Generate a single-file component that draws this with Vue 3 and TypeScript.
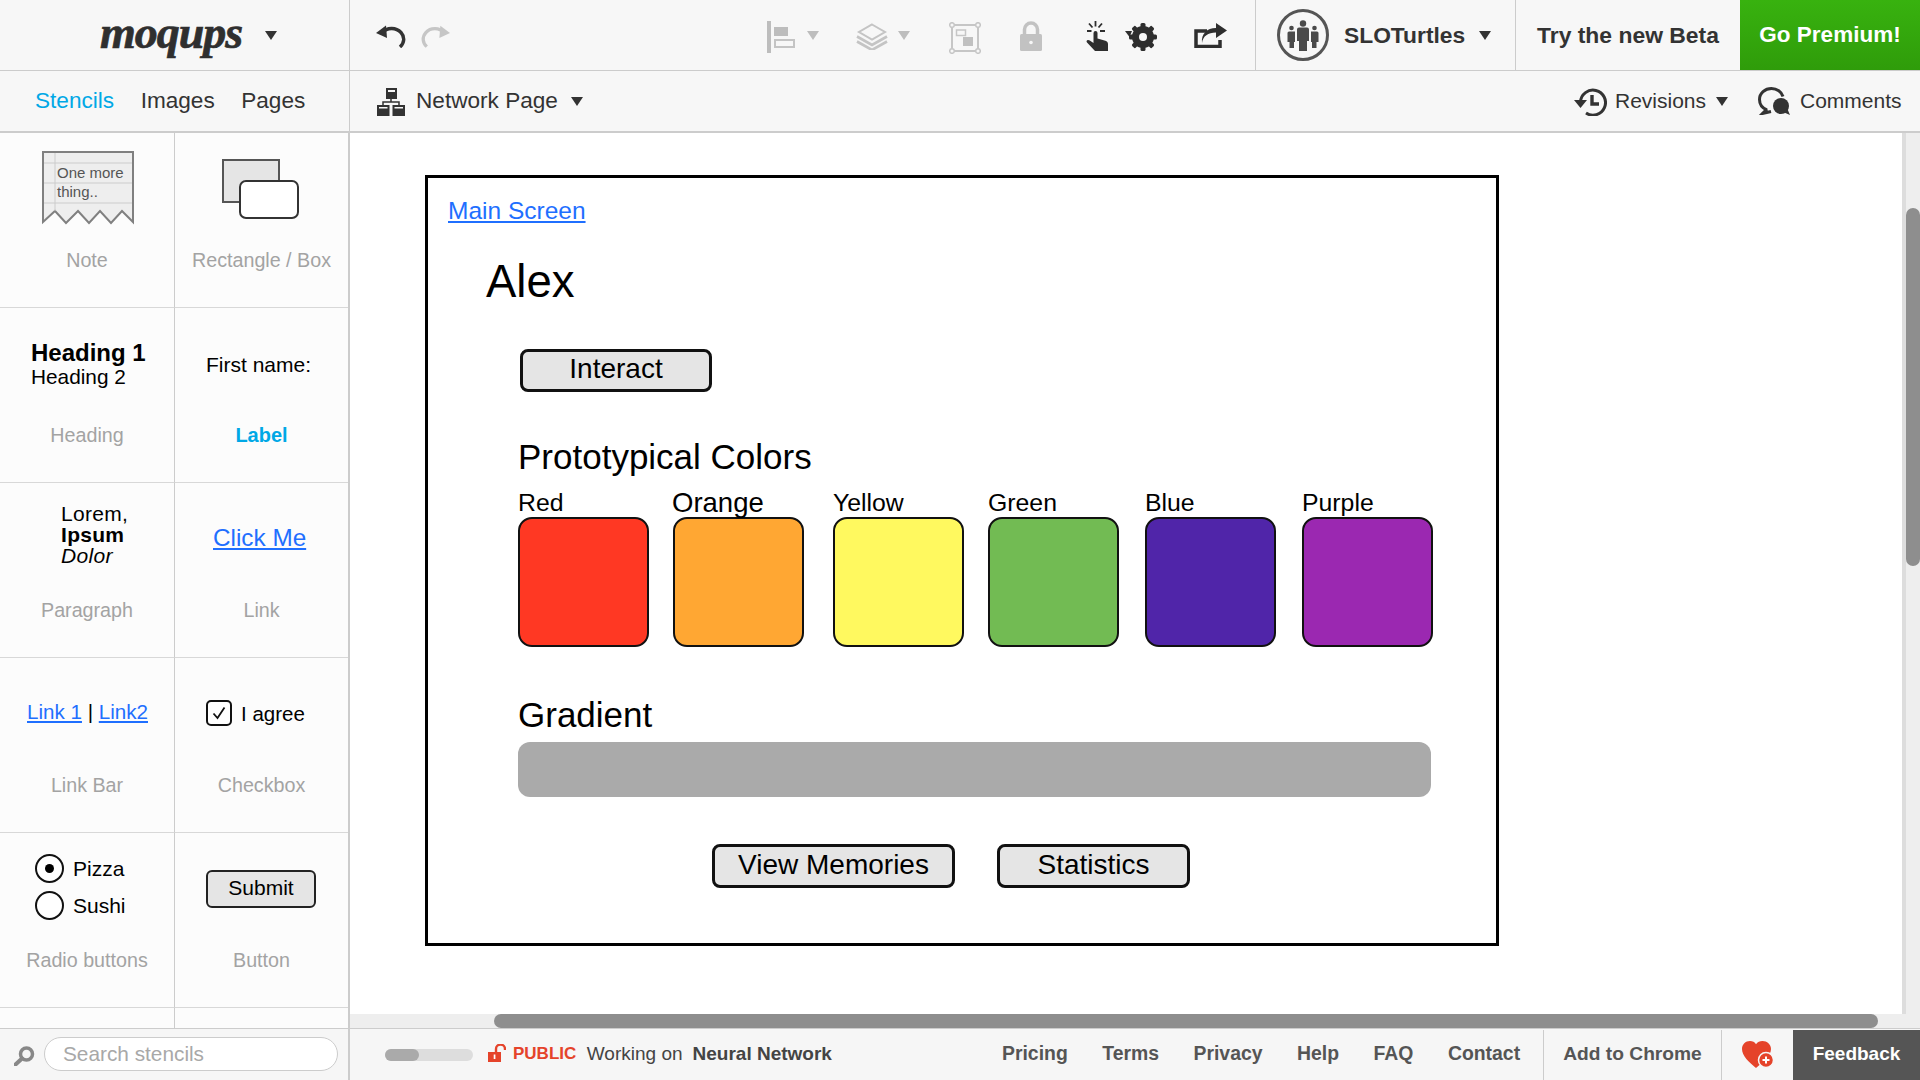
<script setup lang="ts">
const swatches: { name: string; color: string; big?: boolean }[] = [
  { name: 'Red', color: '#ff3823' },
  { name: 'Orange', color: '#ffa733', big: true },
  { name: 'Yellow', color: '#fff95f' },
  { name: 'Green', color: '#72bb53' },
  { name: 'Blue', color: '#5025a9' },
  { name: 'Purple', color: '#9b28b1' },
]
const footerLinks: string[] = ['Pricing', 'Terms', 'Privacy', 'Help', 'FAQ', 'Contact']
</script>

<template>
  <div class="app">
    <header class="topbar">
      <div class="logo-cell">
        <span class="logo">moqups</span>
        <i class="caret logo-caret"></i>
      </div>
      <div class="tools">
        <svg class="ic-undo" width="30" height="24" viewBox="0 0 30 24"><path d="M6 9C11 3 20 3 25 8.500C29 13 28.500 19 24 23" fill="none" stroke="#333" stroke-width="3.400"/><path d="M0 9L10 1.500L11 14Z" fill="#333"/></svg>
        <svg class="ic-redo" width="29" height="24" viewBox="0 0 30 24"><path d="M24 9C19 3 10 3 5 8.500C1 13 1.500 19 6 23" fill="none" stroke="#c6c6c6" stroke-width="3.400"/><path d="M30 9L20 1.500L19 14Z" fill="#c6c6c6"/></svg>

        <svg class="ic-align" width="28" height="32" viewBox="0 0 28 32"><rect width="4" height="32" fill="#bdbdbd"/><rect x="7" y="6" width="14" height="9" fill="#bdbdbd"/><rect x="8" y="19" width="19" height="7" fill="none" stroke="#c4c4c4" stroke-width="2"/></svg>
        <i class="caret grey ca-align"></i>
        <svg class="ic-layers" width="32" height="27" viewBox="0 0 32 27"><path d="M16 1.500L29 9L16 16.500L3 9Z" fill="none" stroke="#c4c4c4" stroke-width="2"/><path d="M1 13.500L16 22L31 13.500M1 18.500L16 27L31 18.500" fill="none" stroke="#c4c4c4" stroke-width="2.600"/></svg>
        <i class="caret grey ca-layers"></i>
        <svg class="ic-box" width="32" height="32" viewBox="0 0 32 32"><rect x="3" y="3" width="26" height="26" fill="none" stroke="#c6c6c6" stroke-width="2"/><g fill="#f7f7f7" stroke="#c6c6c6" stroke-width="1.500"><circle cx="3" cy="3" r="2.300"/><circle cx="29" cy="3" r="2.300"/><circle cx="3" cy="29" r="2.300"/><circle cx="29" cy="29" r="2.300"/></g><rect x="7.500" y="8" width="9" height="5.500" fill="none" stroke="#c6c6c6" stroke-width="1.500"/><rect x="14" y="15" width="10" height="9" fill="#c0c0c0"/></svg>
        <svg class="ic-lock" width="22" height="30" viewBox="0 0 22 30"><path d="M4.500 14V8.500a6.500 6.500 0 0 1 13 0V14" fill="none" stroke="#c2c2c2" stroke-width="3.500"/><rect y="13" width="22" height="17" rx="1.500" fill="#c2c2c2"/><circle cx="11" cy="21.500" r="1.800" fill="#f7f7f7"/></svg>
        <svg class="ic-hand" width="22" height="31" viewBox="0 0 22 31"><path d="M7.500 13a2 2 0 0 1 4 0V18.500L18.500 20.500C20.800 21.200 22 22.200 22 24V31H9L1 22.500C-0.500 20.500 2 19 3.800 20.500L7.500 23Z" fill="#2e2e2e"/><path d="M9.500 1V6.500M3 3.500L6.500 7.500M16 3.500L12.500 7.500M1 11H5.500M14 11H19" stroke="#2e2e2e" stroke-width="1.800" fill="none"/></svg>
        <svg class="ic-gear" width="33" height="28" viewBox="0 0 33 28"><path d="M0 8H7L4.500 14Z" fill="#2e2e2e"/><g transform="translate(18 14)"><circle r="7.500" fill="none" stroke="#2e2e2e" stroke-width="7"/><g fill="#2e2e2e"><rect x="-2.500" y="-14" width="5" height="28" rx="1.500"/><rect x="-2.500" y="-14" width="5" height="28" rx="1.500" transform="rotate(45)"/><rect x="-2.500" y="-14" width="5" height="28" rx="1.500" transform="rotate(90)"/><rect x="-2.500" y="-14" width="5" height="28" rx="1.500" transform="rotate(135)"/></g><circle r="4" fill="#f7f7f7"/></g></svg>
        <svg class="ic-share" width="33" height="25" viewBox="0 0 33 25"><path d="M13 8H2V23.500H26V17" fill="none" stroke="#2e2e2e" stroke-width="3.500"/><path d="M8 20C9 13 14 9.500 22 9.500V15L33 7.500L22 0V5C13 5 7 11 8 20Z" fill="#2e2e2e"/></svg>

        <span class="vline ln-user"></span>
        <svg class="ic-team" width="52" height="52" viewBox="0 0 52 52"><circle cx="26" cy="26" r="24.500" fill="#f7f7f7" stroke="#555" stroke-width="3"/><g fill="#4a4a4a"><circle cx="26" cy="14.500" r="3.200"/><path d="M20 20.500Q20 18.500 22 18.500H30Q32 18.500 32 20.500V32H30V42H22V32H20Z"/><circle cx="14.500" cy="19" r="2.300"/><path d="M10.500 24Q10.500 22.500 12 22.500H18V33H17V39H12.500V33H10.500Z"/><circle cx="37.500" cy="19" r="2.300"/><path d="M34 22.500H40Q41.500 22.500 41.500 24V33H39.500V39H35V33H34Z"/></g></svg>
        <span class="user-name">SLOTurtles</span>
        <i class="caret ca-user"></i>
        <span class="vline ln-beta"></span>
        <span class="beta">Try the new Beta</span>
        <span class="premium">Go Premium!</span>
      </div>
    </header>

    <nav class="subbar">
      <div class="tabs">
        <span class="tab active">Stencils</span>
        <span class="tab">Images</span>
        <span class="tab">Pages</span>
      </div>
      <div class="pagebar">
        <svg class="ic-net" width="28" height="28" viewBox="0 0 28 28"><g fill="#333"><rect x="9" width="11" height="11"/><rect y="17" width="12.500" height="11"/><rect x="15.500" y="17" width="12.500" height="11"/></g><rect x="11" y="2" width="7" height="2" fill="#f7f7f7"/><rect x="2" y="19" width="8.500" height="1.500" fill="#f7f7f7"/><rect x="17.500" y="19" width="8.500" height="1.500" fill="#f7f7f7"/><path d="M14 11V14M6 17V14H22V17" fill="none" stroke="#333" stroke-width="1.500"/></svg>
        <span class="page-name">Network Page</span>
        <i class="caret ca-page"></i>
        <svg class="ic-rev" width="33" height="28" viewBox="0 0 33 28"><path d="M6.500 14A12.500 12.500 0 1 1 12 25" fill="none" stroke="#333" stroke-width="3"/><path d="M0 12H13L6.500 20Z" fill="#333"/><path d="M18 7V16H25" fill="none" stroke="#333" stroke-width="3.400"/></svg>
        <span class="rev-name">Revisions</span>
        <i class="caret ca-rev"></i>
        <svg class="ic-com" width="32" height="28" viewBox="0 0 32 28"><path d="M9 23C4 21 1.500 17 1.500 12.500C1.500 6 7 1.500 13.500 1.500C19 1.500 23.500 5 25 9.500M9 22L4.500 26.500L13 24.500" fill="none" stroke="#333" stroke-width="3"/><circle cx="23" cy="19" r="8" fill="#333"/><path d="M25 25L32 28L29 21Z" fill="#333"/></svg>
        <span class="com-name">Comments</span>
      </div>
    </nav>

    <div class="middle">
      <aside class="sidebar">
        <div class="stencils">
          <div class="cell">
            <div class="preview">
              <svg class="st-note" width="92" height="74" viewBox="0 0 92 74">
                <path d="M1 1H91V71L80 60L69 72L58 60L47 72L36 60L24 72L13 60L1 71Z" fill="#eee" stroke="#808080" stroke-width="2"/>
                <path d="M13 2V60M2 12H90M2 32H90M2 52H90" stroke="#ccc" stroke-width="1" fill="none"/>
                <text x="15" y="27" class="note-text">One more</text>
                <text x="15" y="46" class="note-text">thing..</text>
              </svg>
            </div>
            <div class="label">Note</div>
          </div>
          <div class="cell">
            <div class="preview">
              <svg class="st-rect" width="78" height="60" viewBox="0 0 78 60"><rect x="1" y="1" width="56" height="42" fill="#e5e5e5" stroke="#555" stroke-width="2"/><rect x="18" y="22" width="58" height="37" rx="6" fill="#fff" stroke="#333" stroke-width="2"/></svg>
            </div>
            <div class="label">Rectangle / Box</div>
          </div>

          <div class="cell">
            <div class="preview">
              <div class="st-heading"><div class="h1">Heading 1</div><div class="h2">Heading 2</div></div>
            </div>
            <div class="label">Heading</div>
          </div>
          <div class="cell">
            <div class="preview"><div class="st-first">First name:</div></div>
            <div class="label blue">Label</div>
          </div>

          <div class="cell">
            <div class="preview">
              <div class="st-para"><div>Lorem,</div><div class="b">Ipsum</div><div class="it">Dolor</div></div>
            </div>
            <div class="label">Paragraph</div>
          </div>
          <div class="cell">
            <div class="preview"><a class="link st-click">Click Me</a></div>
            <div class="label">Link</div>
          </div>

          <div class="cell">
            <div class="preview"><div class="st-linkbar"><a class="link">Link 1</a> | <a class="link">Link2</a></div></div>
            <div class="label">Link Bar</div>
          </div>
          <div class="cell">
            <div class="preview">
              <div class="st-check">
                <svg width="26" height="26" viewBox="0 0 26 26"><rect x="1" y="1" width="24" height="24" rx="4" fill="#fff" stroke="#111" stroke-width="2"/><path d="M7.500 13.500L11.500 18L18.500 7.500" fill="none" stroke="#111" stroke-width="1.800"/></svg>
                <span>I agree</span>
              </div>
            </div>
            <div class="label">Checkbox</div>
          </div>

          <div class="cell">
            <div class="preview">
              <div class="st-radio">
                <div class="radio-row"><span class="radio on"></span><span>Pizza</span></div>
                <div class="radio-row"><span class="radio"></span><span>Sushi</span></div>
              </div>
            </div>
            <div class="label">Radio buttons</div>
          </div>
          <div class="cell">
            <div class="preview"><div class="st-submit">Submit</div></div>
            <div class="label">Button</div>
          </div>

          <div class="cell stub"></div>
          <div class="cell stub"></div>
        </div>
        <div class="search">
          <svg class="ic-search" width="21" height="20" viewBox="0 0 21 20"><circle cx="12.500" cy="8" r="6" fill="none" stroke="#888" stroke-width="3.500"/><path d="M8 12.500L1.500 18.500" stroke="#888" stroke-width="4" stroke-linecap="round"/></svg>
          <div class="search-input">Search stencils</div>
        </div>
      </aside>

      <main class="workspace">
        <div class="view">
          <div class="canvas">
            <section class="frame">
              <a class="link main-link">Main Screen</a>
              <div class="alex">Alex</div>
              <div class="mock-btn interact">Interact</div>
              <div class="section-title proto">Prototypical Colors</div>
              <div class="swatches">
                <div v-for="s in swatches" :key="s.name" class="swatch-col">
                  <div class="swatch-name" :class="{ big: s.big }">{{ s.name }}</div>
                  <div class="swatch" :style="{ background: s.color }"></div>
                </div>
              </div>
              <div class="section-title gradient">Gradient</div>
              <div class="bar"></div>
              <div class="actions">
                <div class="mock-btn memories">View Memories</div>
                <div class="mock-btn stats">Statistics</div>
              </div>
            </section>
          </div>
          <div class="vscroll"><div class="vthumb"></div></div>
        </div>
        <div class="hscroll"><div class="hthumb"></div></div>
        <footer class="footer">
          <div class="zoom"><div class="zoom-thumb"></div></div>
          <svg class="ic-open" width="18" height="18" viewBox="0 0 18 18"><path d="M8 9V5a4.500 4.500 0 0 1 9 0V6" fill="none" stroke="#e5432a" stroke-width="2.400"/><rect y="8" width="13" height="10" fill="#e5432a"/><rect x="5.700" y="10.500" width="1.700" height="4.500" fill="#fff"/></svg>
          <b class="public">PUBLIC</b>
          <span class="working">Working on</span>
          <b class="project">Neural Network</b>
          <div class="foot-links">
            <span v-for="l in footerLinks" :key="l" class="foot-link">{{ l }}</span>
          </div>
          <div class="add-chrome">Add to Chrome</div>
          <div class="heart-cell">
            <svg width="32" height="28" viewBox="0 0 32 28"><path d="M14 27C7 21 0 15 0 8C0 3.500 3.500 0 8 0C10.500 0 12.800 1.200 14 3.200C15.500 1.200 17.800 0 20.500 0C25 0 29 3.500 29 8C29 15 21 21 14 27Z" fill="#e5432a"/><circle cx="24" cy="19" r="7.500" fill="#e5432a" stroke="#f6f6f6" stroke-width="1.500"/><path d="M24 15.500V22.500M20.500 19H27.500" stroke="#fff" stroke-width="2"/></svg>
          </div>
          <div class="feedback">Feedback</div>
        </footer>
      </main>
    </div>
  </div>
</template>

<style scoped>
.app {
  width: 1920px;
  height: 1080px;
  display: flex;
  flex-direction: column;
  overflow: hidden;
  font-family: "Liberation Sans", Arial, sans-serif;
  color: #333;
  background: #fff;
}
.caret {
  display: block;
  flex: none;
  width: 0;
  height: 0;
  border-left: 6px solid transparent;
  border-right: 6px solid transparent;
  border-top: 9px solid #333;
}
.caret.grey { border-top-color: #bdbdbd; }

/* top bar */
.topbar {
  height: 71px;
  flex: none;
  display: flex;
  background: #f7f7f7;
  border-bottom: 1px solid #ccc;
  box-sizing: border-box;
}
.logo-cell {
  width: 350px;
  flex: none;
  box-sizing: border-box;
  border-right: 1px solid #ccc;
  display: flex;
  align-items: center;
}
.logo {
  margin-left: 100px;
  margin-top: -4px;
  width: 146px;
  font-family: "Liberation Serif", serif;
  font-weight: 700;
  font-style: italic;
  font-size: 46px;
  line-height: 60px;
  letter-spacing: -1px;
  color: #2f2f2f;
  -webkit-text-stroke: 0.7px #2f2f2f;
}
.logo-caret { margin-left: 19px; }
.tools { flex: 1; display: flex; align-items: center; height: 70px; }
.tools svg { flex: none; }
.ic-undo { margin-left: 26px; margin-top: 2px; }
.ic-redo { margin-left: 15px; margin-top: 2px; }
.ic-align { margin-left: 317px; margin-top: 4px; }
.ca-align { margin-left: 12px; }
.ic-layers { margin-left: 37px; margin-top: 3px; }
.ca-layers { margin-left: 10px; }
.ic-box { margin-left: 39px; margin-top: 5px; }
.ic-lock { margin-left: 39px; margin-top: 2px; }
.ic-hand { margin-left: 44px; margin-top: 1px; }
.ic-gear { margin-left: 17px; margin-top: 4px; }
.ic-share { margin-left: 36px; margin-top: 1px; }
.vline { width: 1px; height: 70px; background: #ccc; flex: none; }
.ln-user { margin-left: 28px; }
.ic-team { margin-left: 21px; }
.user-name { margin-left: 15px; width: 135px; font-size: 22.800px; font-weight: 700; color: #333; }
.ln-beta { margin-left: 24px; }
.beta { margin-left: 21px; width: 203px; font-size: 22.900px; font-weight: 700; color: #333; white-space: nowrap; }
.premium {
  width: 180px;
  height: 70px;
  flex: none;
  display: flex;
  align-items: center;
  justify-content: center;
  background: linear-gradient(#38b20f, #2f9c0a);
  color: #fff;
  font-size: 22.500px;
  font-weight: 700;
  white-space: nowrap;
}

/* second bar */
.subbar {
  height: 62px;
  flex: none;
  display: flex;
  background: #f7f7f7;
  border-bottom: 2px solid #ccc;
  box-sizing: border-box;
}
.tabs {
  width: 350px;
  flex: none;
  box-sizing: border-box;
  border-right: 1px solid #ccc;
  display: flex;
  align-items: center;
  padding-left: 35px;
  font-size: 22.600px;
}
.tab { margin-right: 26.500px; color: #333; }
.tab.active { color: #00a8e6; }
.pagebar { flex: 1; display: flex; align-items: center; }
.pagebar svg { flex: none; }
.ic-net { margin-left: 27px; margin-top: 1px; }
.page-name { margin-left: 11px; width: 155px; font-size: 22.600px; white-space: nowrap; color: #333; }
.ic-rev { margin-left: 991px; margin-top: 1px; }
.rev-name { margin-left: 8px; width: 101px; font-size: 21px; color: #333; }
.ic-com { margin-left: 30px; }
.com-name { margin-left: 10px; font-size: 21px; color: #333; }

/* sidebar */
.middle { flex: 1; display: flex; min-height: 0; }
.sidebar {
  width: 350px;
  flex: none;
  box-sizing: border-box;
  border-right: 2px solid #ccc;
  display: flex;
  flex-direction: column;
  background: #fcfcfc;
}
.stencils {
  height: 895px;
  flex: none;
  overflow: hidden;
  display: grid;
  grid-template-columns: 175px 173px;
  grid-auto-rows: 175px;
  border-bottom: 1px solid #ccc;
}
.cell {
  box-sizing: border-box;
  border-bottom: 1px solid #d8d8d8;
  display: flex;
  flex-direction: column;
}
.cell:nth-child(odd) { border-right: 1px solid #ccc; }
.preview { height: 112px; flex: none; }
.label {
  height: 30px;
  line-height: 30px;
  text-align: center;
  font-size: 19.700px;
  color: #a3a3a3;
}
.label.blue { color: #00a8e6; font-weight: 700; font-size: 20px; }
.st-note { display: block; margin: 18px 0 0 42px; }
.st-rect { display: block; margin: 26px 0 0 47px; }
.st-heading { padding: 31px 0 0 31px; color: #000; }
.h1 { font-size: 24px; font-weight: 700; line-height: 27px; }
.h2 { font-size: 20.800px; line-height: 24px; margin-top: -1px; }
.st-first { padding: 45px 0 0 31px; font-size: 21px; line-height: 24px; color: #000; }
.st-para { padding: 20px 0 0 61px; font-size: 21px; line-height: 21px; letter-spacing: 0.3px; color: #000; }
.st-para .b { font-weight: 700; }
.st-para .it { font-style: italic; }
.link { color: #1f6fff; text-decoration: underline; }
.st-click { display: block; padding: 41px 0 0 38px; font-size: 24.300px; line-height: 28px; }
.st-linkbar { padding: 41px 0 0 27px; font-size: 20.600px; line-height: 26px; color: #000; }
.st-check { display: flex; align-items: center; padding: 42px 0 0 31px; font-size: 20.500px; color: #000; }
.st-check span { margin-left: 9px; margin-top: 2px; }
.st-radio { padding: 21px 0 0 35px; font-size: 21px; color: #000; }
.radio-row { display: flex; align-items: center; height: 29px; margin-bottom: 8px; }
.radio-row span:last-child { margin-left: 9px; }
.radio {
  box-sizing: border-box;
  width: 29px;
  height: 29px;
  border: 2px solid #111;
  border-radius: 50%;
  background: #fff;
  display: block;
  position: relative;
  flex: none;
}
.radio.on::after {
  content: "";
  position: absolute;
  left: 8px;
  top: 8px;
  width: 9px;
  height: 9px;
  border-radius: 50%;
  background: #000;
}
.st-submit {
  box-sizing: border-box;
  width: 110px;
  height: 38px;
  margin: 37px 0 0 31px;
  border: 2px solid #222;
  border-radius: 6px;
  background: #e5e5e5;
  color: #000;
  font-size: 21px;
  line-height: 32px;
  text-align: center;
}
.search {
  flex: 1;
  display: flex;
  align-items: center;
  background: #f6f6f6;
  padding-bottom: 2px;
}
.ic-search { margin-left: 14px; flex: none; margin-top: 4px; }
.search-input {
  box-sizing: border-box;
  width: 294px;
  height: 34px;
  margin-left: 9px;
  padding-left: 18px;
  border: 1px solid #ccc;
  border-radius: 17px;
  background: #fff;
  font-size: 20.800px;
  line-height: 32px;
  color: #a8a8a8;
}

/* workspace */
.workspace { flex: 1; min-width: 0; display: flex; flex-direction: column; }
.view { height: 881px; flex: none; display: flex; background: #fff; }
.canvas { width: 1552px; flex: none; padding: 42px 0 0 75px; box-sizing: border-box; }
.vscroll {
  width: 18px;
  box-sizing: border-box;
  border-left: 4px solid #ddd;
  background: #eee;
  padding-top: 75px;
}
.vthumb { height: 358px; border-radius: 7px; background: #8e8e8e; }
.hscroll { height: 14px; flex: none; background: #eee; padding-left: 144px; box-sizing: border-box; }
.hthumb { width: 1384px; height: 14px; border-radius: 7px; background: #8e8e8e; }

/* mock frame */
.frame {
  box-sizing: border-box;
  width: 1074px;
  height: 771px;
  border: 3px solid #000;
  color: #000;
  background: #fff;
}
.main-link { display: block; width: max-content; margin: 18px 0 0 20px; font-size: 24.500px; line-height: 30px; }
.alex { margin: 31px 0 0 58px; font-size: 45.500px; line-height: 50px; }
.mock-btn {
  box-sizing: border-box;
  border: 3px solid #111;
  border-radius: 8px;
  background: #e5e5e5;
  text-align: center;
  font-size: 28px;
  white-space: nowrap;
}
.interact { width: 192px; height: 43px; margin: 42px 0 0 92px; line-height: 33px; }
.section-title { margin-left: 90px; line-height: 40px; }
.proto { margin-top: 45px; font-size: 35px; }
.swatches {
  margin: 11px 0 0 90px;
  display: grid;
  grid-template-columns: 155px 160px 155px 157px 157px 131px;
}
.swatch-name { font-size: 24.800px; line-height: 29px; }
.swatch-name.big { font-size: 27.500px; margin-left: -1px; }
.swatch {
  box-sizing: border-box;
  width: 131px;
  height: 130px;
  border: 2px solid #111;
  border-radius: 14px;
}
.gradient { margin-top: 48px; font-size: 35px; }
.bar { width: 913px; height: 55px; margin: 7px 0 0 90px; border-radius: 12px; background: #aaa; }
.actions { display: flex; margin: 47px 0 0 284px; }
.memories { width: 243px; height: 44px; line-height: 35px; }
.stats { width: 193px; height: 44px; line-height: 35px; margin-left: 42px; }

/* footer */
.footer {
  flex: 1;
  box-sizing: border-box;
  border-top: 1px solid #ccc;
  background: #f6f6f6;
  display: flex;
  align-items: center;
  padding-bottom: 2px;
  font-size: 19px;
  color: #444;
  white-space: nowrap;
  min-height: 0;
}
.zoom { width: 88px; height: 12px; margin-left: 35px; margin-top: 2px; border-radius: 6px; background: #ddd; flex: none; }
.zoom-thumb { width: 34px; height: 12px; border-radius: 6px; background: #aaa; }
.ic-open { margin-left: 15px; flex: none; margin-top: -2px; }
.public { margin-left: 7px; color: #e5432a; width: 64px; font-size: 17px; }
.working { margin-left: 10px; width: 96px; }
.project { margin-left: 10px; width: 140px; }
.foot-links { margin-left: 170px; display: flex; width: 541px; flex: none; }
.foot-link { font-weight: 700; color: #555; margin-right: 34.500px; font-size: 19.400px; }
.add-chrome {
  box-sizing: border-box;
  width: 179px;
  height: 50px;
  margin-bottom: -2px;
  padding-bottom: 2px;
  flex: none;
  border-left: 1px solid #ccc;
  border-right: 1px solid #ccc;
  display: flex;
  align-items: center;
  justify-content: center;
  font-weight: 700;
  font-size: 19.200px;
  color: #555;
}
.heart-cell { width: 71px; flex: none; display: flex; align-items: center; justify-content: center; margin-top: 2px; }
.feedback {
  box-sizing: border-box;
  width: 127px;
  height: 50px;
  margin-bottom: -2px;
  padding-bottom: 2px;
  flex: none;
  display: flex;
  align-items: center;
  justify-content: center;
  background: #555;
  color: #fff;
  font-weight: 700;
}
.note-text { font-family: "Liberation Sans", Arial, sans-serif; font-size: 15px; fill: #555; }
</style>
